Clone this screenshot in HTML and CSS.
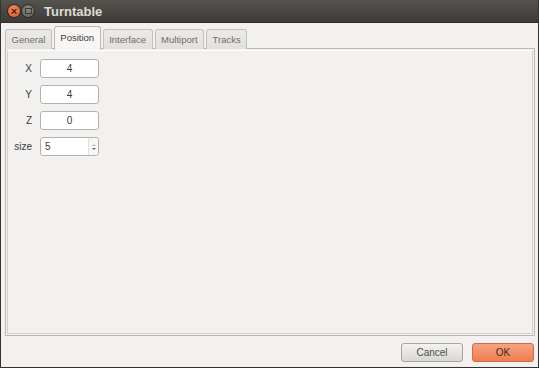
FILE: index.html
```html
<!DOCTYPE html>
<html lang="en">
<head>
    <meta charset="UTF-8">
    <meta name="viewport" content="width=device-width, initial-scale=1.0">
    <title>Turntable</title>
    <link rel="stylesheet" href="styles.css">
</head>
<body>
    <div class="window">
        <div class="title-bar">
            <span class="win-btn close-btn">&times;</span>
            <span class="win-btn min-btn"><span class="min-box"></span></span>
            <span class="title">Turntable</span>
        </div>

        <div class="content">
            <div class="tabs">
                <div class="tab">General</div>
                <div class="tab active">Position</div>
                <div class="tab">Interface</div>
                <div class="tab">Multiport</div>
                <div class="tab">Tracks</div>
            </div>

            <div class="frame">
                <div class="page">
                    <div class="form">
                        <label class="field-label">X</label>
                        <div class="entry">4</div>
                        <label class="field-label">Y</label>
                        <div class="entry">4</div>
                        <label class="field-label">Z</label>
                        <div class="entry">0</div>
                        <label class="field-label">size</label>
                        <div class="entry spin">
                            <span class="spin-value">5</span>
                            <span class="spin-arrows">
                                <span class="arrow up"></span>
                                <span class="arrow down"></span>
                            </span>
                        </div>
                    </div>
                </div>
            </div>

            <div class="button-row">
                <button class="btn cancel-btn">Cancel</button>
                <button class="btn ok-btn">OK</button>
            </div>
        </div>
    </div>
</body>
</html>
```

FILE: styles.css
```css
body {
    margin: 0;
    font-family: "Liberation Sans", Arial, sans-serif;
    font-size: 10px;
    color: #3c3c3c;
    background: #3c3b37;
}

.window {
    width: 539px;
    height: 368px;
    box-sizing: border-box;
    display: flex;
    flex-direction: column;
    background: #f2f1f0;
    border: 1px solid #33322f;
    border-top: none;
    overflow: hidden;
}

.title-bar {
    height: 22px;
    display: flex;
    align-items: center;
    padding-left: 7px;
    background: linear-gradient(#55534e, #3d3c38);
    border-bottom: 1px solid #2f2e2b;
}

.win-btn {
    width: 12px;
    height: 12px;
    border-radius: 50%;
    display: flex;
    align-items: center;
    justify-content: center;
    margin-right: 2px;
    box-shadow: 0 0 0 1px #2c2b28;
}

.close-btn {
    background: radial-gradient(circle at 50% 35%, #f7875a, #e05a25);
    color: #3b1e10;
    font-size: 11px;
    line-height: 12px;
    font-weight: bold;
}

.min-btn {
    background: radial-gradient(circle at 50% 35%, #8a8984, #5d5c58);
}

.min-box {
    width: 5px;
    height: 4px;
    border: 1px solid #3a3936;
}

.title {
    margin-left: 8px;
    color: #dfdbd2;
    font-size: 13px;
    font-weight: bold;
}

.content {
    flex: 1;
    display: flex;
    flex-direction: column;
    padding: 4px 3px 4px 4px;
}

.tabs {
    display: flex;
    align-items: flex-end;
    gap: 2px;
    height: 22px;
    position: relative;
    z-index: 1;
}

.tab {
    height: 19px;
    line-height: 19px;
    padding: 0 5.5px;
    font-size: 9.5px;
    background: linear-gradient(#eceae7, #e2e0dc);
    border: 1px solid #c4c1bc;
    border-bottom: none;
    border-radius: 3px 3px 0 0;
    color: #6f6d69;
}

.tab.active {
    height: 23px;
    line-height: 22px;
    margin-bottom: -1px;
    background: #f7f6f5;
    color: #3c3c3c;
    border-color: #bcb9b4;
}

.frame {
    flex: 1;
    margin-top: -1px;
    border: 1px solid #bcb9b4;
    padding: 1px;
    display: flex;
}

.page {
    flex: 1;
    border: 1px solid #d3d0cb;
    border-top-color: #ffffff;
    padding: 8px 0 0 0;
}

.form {
    display: grid;
    grid-template-columns: 24px 59px;
    column-gap: 8px;
    row-gap: 7px;
    align-items: center;
}

.field-label {
    text-align: right;
    color: #3c3c3c;
}

.entry {
    height: 17px;
    line-height: 17px;
    background: #ffffff;
    border: 1px solid #b4b1ac;
    border-radius: 3px;
    text-align: center;
    color: #3c3c3c;
}

.entry.spin {
    display: flex;
    text-align: left;
}

.spin-value {
    flex: 1;
    padding-left: 4px;
}

.spin-arrows {
    width: 9px;
    display: flex;
    flex-direction: column;
    align-items: center;
    justify-content: center;
    gap: 2px;
    border-left: 1px solid #e2e0dc;
    background: #f7f6f5;
    border-radius: 0 3px 3px 0;
}

.arrow {
    width: 0;
    height: 0;
    border-left: 2px solid transparent;
    border-right: 2px solid transparent;
}

.arrow.up {
    border-bottom: 2px solid #b9b6b1;
}

.arrow.down {
    border-top: 2px solid #6a6864;
}

.button-row {
    display: flex;
    justify-content: flex-end;
    gap: 9px;
    padding: 7px 1px 1px 0;
}

.btn {
    width: 62px;
    height: 19px;
    font-family: "Liberation Sans", Arial, sans-serif;
    font-size: 10px;
    border-radius: 3px;
    padding: 0;
    cursor: pointer;
}

.cancel-btn {
    background: linear-gradient(#f3f2f1, #d9d7d4);
    border: 1px solid #a9a6a1;
    color: #4c4c4c;
}

.ok-btn {
    background: linear-gradient(#f6a483, #ef7c50);
    border: 1px solid #d5683f;
    color: #3c2a22;
}
```
